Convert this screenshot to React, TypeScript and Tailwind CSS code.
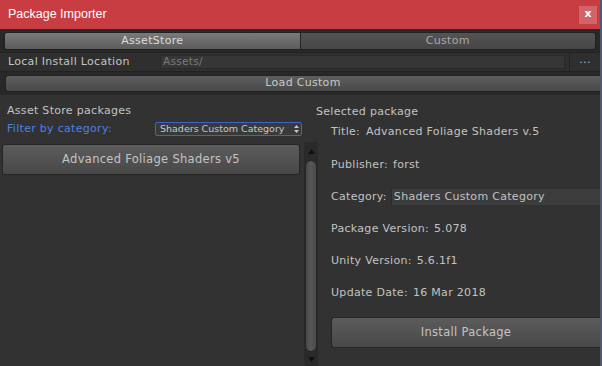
import { FC } from "react";

const font = "font-['DejaVu_Sans',sans-serif]";

const InfoRow: FC<{ label: string; value: string }> = ({ label, value }) => (
  <div className="h-[32px] flex items-center text-[11px] tracking-[0.3px] text-[#c2c2c2]">
    <span>{label}</span>
    <span className="ml-[5px]">{value}</span>
  </div>
);

const App: FC = () => {
  return (
    <div
      className={`w-[602px] h-[366px] overflow-hidden flex flex-col bg-[#323232] border-r-2 border-[#4d5a72] ${font}`}
    >
      {/* title bar */}
      <div className="h-[29px] shrink-0 bg-[#c83d42] flex items-center justify-between pl-[8px] pr-[3px]">
        <span className="text-[12.5px] text-white font-['Liberation_Sans',sans-serif]">
          Package Importer
        </span>
        <div className="w-[18px] h-[18px] bg-[#d26468] flex items-center justify-center text-white text-[11px] font-bold leading-none pb-[2px]">
          x
        </div>
      </div>

      {/* header */}
      <div className="bg-[#282828] shrink-0 text-[11px] tracking-[0.3px]">
        <div className="flex px-[4px] pt-[3px] pb-[2px]">
          <div className="flex-1 h-[18px] rounded-l-[3px] bg-gradient-to-b from-[#7a7a7a] to-[#5c5c5c] border border-[#222] flex items-center justify-center text-[#dcdcdc]">
            AssetStore
          </div>
          <div className="flex-1 h-[18px] rounded-r-[3px] bg-gradient-to-b from-[#545454] to-[#464646] border border-l-0 border-[#222] flex items-center justify-center text-[#a8a8a8]">
            Custom
          </div>
        </div>
        <div className="h-[20px] flex items-center bg-[#2f2f2f] border-y border-[#222]">
          <span className="w-[160px] pl-[8px] text-[#c4c4c4]">Local Install Location</span>
          <div className="w-[405px] h-[14px] bg-[#363636] border border-[#2a2a2a] flex items-center pl-[2px] text-[10.5px] text-[#7a7a7a]">
            Assets/
          </div>
          <div className="ml-[4px] flex-1 h-full border-l border-[#222] flex items-center justify-center text-[#bbbbbb] pb-[3px]">
            ...
          </div>
        </div>
        <div className="pl-[5px] pt-[3px] pb-[3px]">
          <div className="h-[17px] rounded-l-[3px] bg-gradient-to-b from-[#5e5e5e] to-[#484848] border border-[#222] border-r-0 flex items-center justify-center text-[#c8c8c8]">
            Load Custom
          </div>
        </div>
      </div>

      {/* main */}
      <div className="flex-1 flex min-h-0 text-[11px] tracking-[0.3px]">
        <div className="w-[304px] shrink-0 flex flex-col pl-[2px] pt-[9px]">
          <div className="h-[14px] pl-[5px] flex items-center text-[#c2c2c2]">
            Asset Store packages
          </div>
          <div className="h-[22px] flex items-center justify-between pl-[5px] pr-[2px]">
            <span className="text-[#4c80e6]">Filter by category:</span>
            <div className="w-[147px] h-[14px] rounded-[2px] bg-[#3a3a3a] border border-[#3d62d6] flex items-center justify-between pl-[4px] pr-[2px] text-[9.5px] tracking-normal text-[#c8c8c8] whitespace-nowrap overflow-hidden">
              <span>Shaders Custom Category</span>
              <svg width="5" height="8" viewBox="0 0 5 8" className="shrink-0">
                <path d="M2.5 0 L5 3 L0 3 Z M0 5 L5 5 L2.5 8 Z" fill="#c8c8c8" />
              </svg>
            </div>
          </div>
          <div className="mt-[4px] w-[298px] h-[31px] rounded-[3px] bg-gradient-to-b from-[#5c5c5c] to-[#484848] border border-[#262626] flex items-center justify-center text-[11.5px] text-[#c4c4c4]">
            Advanced Foliage Shaders v5
          </div>
        </div>

        {/* scrollbar */}
        <div className="w-[14px] shrink-0 mt-[47px] bg-[#2a2a2a] flex flex-col items-center">
          <div className="h-[18px] flex items-center justify-center">
            <svg width="7" height="5" viewBox="0 0 7 5">
              <path d="M3.5 0 L7 5 L0 5 Z" fill="#111" />
            </svg>
          </div>
          <div className="w-[12px] flex-1 rounded-[6px] bg-gradient-to-r from-[#4a4a4a] via-[#575757] to-[#4a4a4a] border border-[#252525]" />
          <div className="h-[14px] flex items-center justify-center">
            <svg width="7" height="5" viewBox="0 0 7 5">
              <path d="M0 0 L7 0 L3.5 5 Z" fill="#111" />
            </svg>
          </div>
        </div>

        {/* details */}
        <div className="flex-1 flex flex-col pt-[10px]">
          <div className="h-[14px] ml-[-2px] flex items-center text-[#c2c2c2]">
            Selected package
          </div>
          <div className="pl-[13px]">
            <div className="h-[30px] pb-[3px] flex items-center text-[#c2c2c2]">
              <span>Title:</span>
              <span className="ml-[6px]">Advanced Foliage Shaders v.5</span>
            </div>
            <InfoRow label="Publisher:" value="forst" />
            <div className="h-[32px] flex items-center text-[#c2c2c2]">
              <span>Category:</span>
              <div className="ml-[4px] flex-1 h-[16px] bg-[#3c3c3c] border-l border-[#2a2a2a] flex items-center pl-[2px] whitespace-nowrap">
                Shaders Custom Category
              </div>
            </div>
            <InfoRow label="Package Version:" value="5.078" />
            <InfoRow label="Unity Version:" value="5.6.1f1" />
            <InfoRow label="Update Date:" value="16 Mar 2018" />
            <div className="mt-[8px] h-[31px] rounded-l-[3px] bg-gradient-to-b from-[#5c5c5c] to-[#484848] border border-r-0 border-[#262626] flex items-center justify-center text-[11.5px] text-[#c4c4c4]">
              Install Package
            </div>
          </div>
        </div>
      </div>
    </div>
  );
};

export default App;
